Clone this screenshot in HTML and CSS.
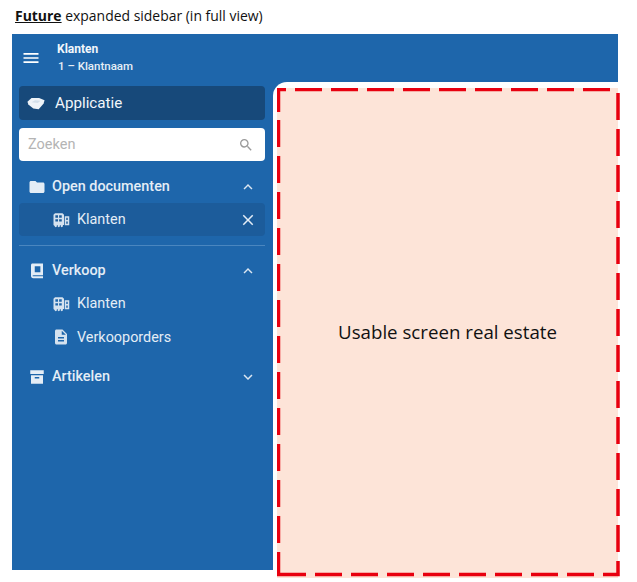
FILE: index.html
```html
<!DOCTYPE html>
<html lang="nl">
<head>
<meta charset="utf-8">
<title>Future expanded sidebar</title>
<link rel="stylesheet" href="styles.css">
</head>
<body>
<p class="caption"><strong>Future</strong> expanded sidebar (in full view)</p>
<div class="app">
  <header class="topbar">
    <svg class="ico-menu" viewBox="0 0 24 24"><path d="M3 18h18v-2H3v2zm0-5h18v-2H3v2zm0-7v2h18V6H3z"/></svg>
    <div class="crumbs">
      <div class="crumb-title">Klanten</div>
      <div class="crumb-sub">1 – Klantnaam</div>
    </div>
  </header>
  <div class="body">
    <aside class="sidebar">
      <div class="app-switch">
        <svg class="ico-gem" viewBox="0 0 20 14"><path d="M0.500 5 5 1h8.500l6 2.500-1 3.500L13 13.500 7 12.500 1.500 8z"/><path class="facet" d="M5 5.500l7 1 3-2.500-6-.5z"/></svg>
        <span>Applicatie</span>
      </div>
      <div class="search">
        <span>Zoeken</span>
        <svg class="ico" viewBox="0 0 24 24"><path d="M15.500 14h-.79l-.28-.27A6.471 6.471 0 0 0 16 9.500 6.500 6.500 0 1 0 9.500 16c1.610 0 3.090-.59 4.230-1.570l.27.28v.79l5 4.990L20.490 19l-4.990-5zm-6 0C7.010 14 5 11.990 5 9.500S7.010 5 9.500 5 14 7.010 14 9.500 11.990 14 9.500 14z"/></svg>
      </div>
      <div class="group first">
        <svg class="ico" viewBox="0 0 24 24"><path d="M10 4H4c-1.100 0-1.990.9-1.990 2L2 18c0 1.100.9 2 2 2h16c1.100 0 2-.9 2-2V8c0-1.100-.9-2-2-2h-8l-2-2z"/></svg>
        <span class="label">Open documenten</span>
        <svg class="ico-chev" viewBox="0 0 24 24"><path d="M12 8l-6 6 1.410 1.410L12 10.830l4.590 4.580L18 14z"/></svg>
      </div>
      <div class="item active">
        <svg class="ico" viewBox="0 0 24 24"><path fill-rule="evenodd" d="M2 18.500V5l2-2h10l2 2v13.500h-1.500V20a1.500 1.500 0 0 1-3 0v-1.500h-1V20a1.500 1.500 0 0 1-3 0v-1.500h-1V20a1.500 1.500 0 0 1-3 0zM4.500 5.500V9H8V5.500zm5 0V9H13V5.500zM4.500 11v3H8v-3zm5 0v3H13v-3zM17 7h6v12h-6zm2 2v3h2V9zm0 5v3h2v-3z"/></svg>
        <span class="label">Klanten</span>
        <svg class="ico-close" viewBox="0 0 24 24"><path d="M19 6.410L17.590 5 12 10.590 6.410 5 5 6.410 10.590 12 5 17.590 6.410 19 12 13.410 17.590 19 19 17.590 13.410 12z"/></svg>
      </div>
      <hr class="divider">
      <div class="group">
        <svg class="ico" viewBox="0 0 24 24"><path fill-rule="evenodd" d="M6 2h14v15.500H7.500c-.9 0-1.500.3-1.500.8s.6.7 1.500.7H20v2.500H7c-2 0-3-1.500-3-3V4c0-1.100.9-2 2-2zm3 3.500v8h7.500v-8z"/></svg>
        <span class="label">Verkoop</span>
        <svg class="ico-chev" viewBox="0 0 24 24"><path d="M12 8l-6 6 1.410 1.410L12 10.830l4.590 4.580L18 14z"/></svg>
      </div>
      <div class="item">
        <svg class="ico" viewBox="0 0 24 24"><path fill-rule="evenodd" d="M2 18.500V5l2-2h10l2 2v13.500h-1.500V20a1.500 1.500 0 0 1-3 0v-1.500h-1V20a1.500 1.500 0 0 1-3 0v-1.500h-1V20a1.500 1.500 0 0 1-3 0zM4.500 5.500V9H8V5.500zm5 0V9H13V5.500zM4.500 11v3H8v-3zm5 0v3H13v-3zM17 7h6v12h-6zm2 2v3h2V9zm0 5v3h2v-3z"/></svg>
        <span class="label">Klanten</span>
      </div>
      <div class="item">
        <svg class="ico" viewBox="0 0 24 24"><path d="M14 2H6c-1.100 0-1.990.9-1.990 2L4 20c0 1.100.89 2 1.990 2H18c1.100 0 2-.9 2-2V8l-6-6zm2 16H8v-2h8v2zm0-4H8v-2h8v2zm-3-5V3.500L18.500 9H13z"/></svg>
        <span class="label">Verkooporders</span>
      </div>
      <div class="group last">
        <svg class="ico" viewBox="0 0 24 24"><path fill-rule="evenodd" d="M3 3h18v5H3zM4 9.500h16V21H4zM9 12v2h6v-2z"/></svg>
        <span class="label">Artikelen</span>
        <svg class="ico-chev" viewBox="0 0 24 24"><path d="M16.590 8.590L12 13.170 7.410 8.590 6 10l6 6 6-6z"/></svg>
      </div>
    </aside>
    <main class="content">
      <div class="estate">
        <span>Usable screen real estate</span>
        <svg class="dashes" viewBox="0 0 343 490">
          <path d="M1.500 24V1.500H9M18 1.500h27M54 1.500h27M90 1.500h27M126 1.500h27M162 1.500h27M198 1.500h27M234 1.500h27M270 1.500h27M306 1.500h27"/>
          <path d="M341 5v27M341 41v27M341 77v27M341 113v27M341 149v27M341 185v27M341 221v27M341 257v27M341 293v27M341 329v27M341 365v27M341 401v27M341 437v27M341 473v13.500H326"/>
          <path d="M317 486.500h-27M281 486.500h-27M245 486.500h-27M209 486.500h-27M173 486.500h-27M137 486.500h-27M101 486.500h-27M65 486.500h-27M29 486.500H1.500V464"/>
          <path d="M1.500 455v-27M1.500 419v-27M1.500 383v-27M1.500 347v-27M1.500 311v-27M1.500 275v-27M1.500 239v-27M1.500 203v-27M1.500 167v-27M1.500 131v-27M1.500 95v-27M1.500 59v-27"/>
        </svg>
      </div>
    </main>
  </div>
</div>
</body>
</html>
```
FILE: styles.css
```css
* { box-sizing: border-box; }
html, body { margin: 0; padding: 0; background: #fff; }
body { width: 637px; height: 582px; overflow: hidden; font-family: Roboto, "Liberation Sans", sans-serif; }

.caption {
  margin: 0;
  height: 34px;
  padding: 6px 0 0 15px;
  font: 13.950px/20px "Open Sans", "Noto Sans", sans-serif;
  color: #111;
}
.caption strong { text-decoration: underline; }

.app {
  margin-left: 12px;
  width: 606px;
  height: 536px;
  background: #1e66ab;
  color: #fff;
  display: flex;
  flex-direction: column;
}

.topbar {
  height: 48px;
  flex: none;
  display: flex;
  align-items: center;
  padding-left: 9px;
  gap: 16px;
}
.ico-menu { width: 20px; height: 20px; fill: #fff; flex: none; }
.crumbs { margin-top: -1px; }
.crumb-title { font-size: 12px; line-height: 17px; font-weight: 700; color: #f2f7fb; }
.crumb-sub { font-size: 11.500px; line-height: 17px; font-weight: 500; color: #e6eef6; padding-left: 1px; }

.body { flex: 1; display: flex; min-height: 0; }

.sidebar {
  width: 261px;
  flex: none;
  padding: 4px 8px 0 7px;
  display: flex;
  flex-direction: column;
}

.app-switch {
  height: 34px;
  background: #17497a;
  border-radius: 4px;
  display: flex;
  align-items: center;
  padding-left: 8px;
  gap: 10px;
  font-size: 15.200px;
  color: #f2f6fa;
}
.ico-gem { width: 18px; height: 13px; fill: #eef3f8; flex: none; }
.ico-gem .facet { fill: #d3dfea; }

.search {
  margin-top: 8px;
  height: 33px;
  background: #fff;
  border-radius: 4px;
  display: flex;
  align-items: center;
  justify-content: space-between;
  padding: 0 11px 0 9px;
  font-size: 14.500px;
  color: #b4b4b4;
}
.search .ico { width: 16px; height: 16px; fill: #9a9a9a; }

.group, .item {
  display: flex;
  align-items: center;
  font-size: 14.400px;
  color: #e4edf6;
}
.group { height: 33px; padding: 0 8px 0 9px; font-weight: 500; }
.group.first { margin-top: 9px; }
.group.last { margin-top: 6px; }
.group .ico { width: 18px; height: 18px; fill: #e4edf6; margin-right: 6px; flex: none; }
.item { height: 33.500px; padding: 0 8px 0 33px; }
.item .ico { width: 18px; height: 18px; fill: #d5e2ef; margin-right: 7px; flex: none; }
.label { flex: 1; }
.item.active { background: #1c5c9b; border-radius: 4px; height: 33px; }
.ico-chev { width: 18px; height: 18px; fill: #dbe6f1; flex: none; }
.ico-close { width: 18px; height: 18px; fill: #e4edf6; flex: none; }

.divider {
  margin: 9px 0 8px;
  border: 0;
  height: 1px;
  background: #4a86bf;
  width: 246px;
}

.content {
  flex: 1;
  background: #fff;
  border-top-left-radius: 14px;
  padding: 6px 0 0 4px;
}
.estate {
  position: relative;
  height: 490px;
  background: #fde4d8;
  display: flex;
  justify-content: center;
  padding: 232px 0 0 0;
  font: 18.700px/24px "Open Sans", "Noto Sans", sans-serif;
  color: #111;
}
.dashes {
  position: absolute;
  left: 0;
  top: 0;
  width: 343px;
  height: 490px;
  fill: none;
  stroke: #e8000f;
  stroke-width: 3.500;
}
```
